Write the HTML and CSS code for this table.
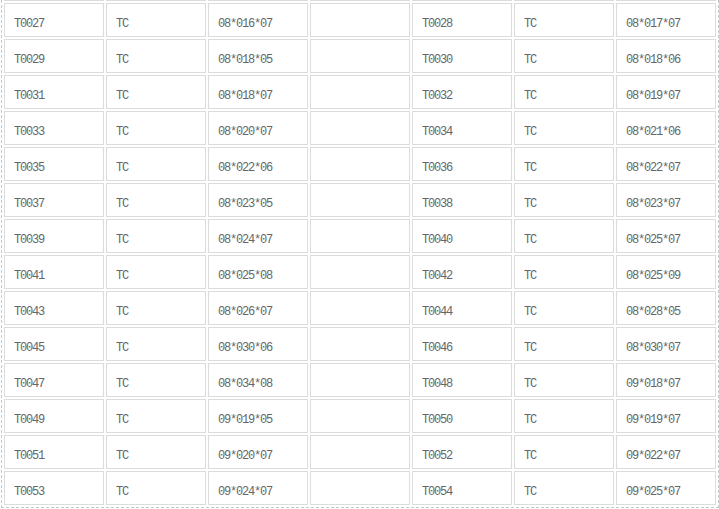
FILE: index.html
```html
<!DOCTYPE html>
<html>
<head>
<meta charset="utf-8">
<link rel="stylesheet" href="styles.css">
</head>
<body>
<table class="grid">
<tr><td>&nbsp;</td><td>&nbsp;</td><td>&nbsp;</td><td>&nbsp;</td><td>&nbsp;</td><td>&nbsp;</td><td>&nbsp;</td></tr>
<tr><td>T0027</td><td>TC</td><td>08*016*07</td><td>&nbsp;</td><td>T0028</td><td>TC</td><td>08*017*07</td></tr>
<tr><td>T0029</td><td>TC</td><td>08*018*05</td><td>&nbsp;</td><td>T0030</td><td>TC</td><td>08*018*06</td></tr>
<tr><td>T0031</td><td>TC</td><td>08*018*07</td><td>&nbsp;</td><td>T0032</td><td>TC</td><td>08*019*07</td></tr>
<tr><td>T0033</td><td>TC</td><td>08*020*07</td><td>&nbsp;</td><td>T0034</td><td>TC</td><td>08*021*06</td></tr>
<tr><td>T0035</td><td>TC</td><td>08*022*06</td><td>&nbsp;</td><td>T0036</td><td>TC</td><td>08*022*07</td></tr>
<tr><td>T0037</td><td>TC</td><td>08*023*05</td><td>&nbsp;</td><td>T0038</td><td>TC</td><td>08*023*07</td></tr>
<tr><td>T0039</td><td>TC</td><td>08*024*07</td><td>&nbsp;</td><td>T0040</td><td>TC</td><td>08*025*07</td></tr>
<tr><td>T0041</td><td>TC</td><td>08*025*08</td><td>&nbsp;</td><td>T0042</td><td>TC</td><td>08*025*09</td></tr>
<tr><td>T0043</td><td>TC</td><td>08*026*07</td><td>&nbsp;</td><td>T0044</td><td>TC</td><td>08*028*05</td></tr>
<tr><td>T0045</td><td>TC</td><td>08*030*06</td><td>&nbsp;</td><td>T0046</td><td>TC</td><td>08*030*07</td></tr>
<tr><td>T0047</td><td>TC</td><td>08*034*08</td><td>&nbsp;</td><td>T0048</td><td>TC</td><td>09*018*07</td></tr>
<tr><td>T0049</td><td>TC</td><td>09*019*05</td><td>&nbsp;</td><td>T0050</td><td>TC</td><td>09*019*07</td></tr>
<tr><td>T0051</td><td>TC</td><td>09*020*07</td><td>&nbsp;</td><td>T0052</td><td>TC</td><td>09*022*07</td></tr>
<tr><td>T0053</td><td>TC</td><td>09*024*07</td><td>&nbsp;</td><td>T0054</td><td>TC</td><td>09*025*07</td></tr>
</table>
</body>
</html>
```
FILE: styles.css
```css
html, body {
  margin: 0;
  padding: 0;
  background: #fff;
  overflow: hidden;
}
.grid {
  margin: -35px 0 0 1px;
  border: 1px dashed #c8c8c8;
  border-top: none;
  border-collapse: separate;
  border-spacing: 2px;
  table-layout: fixed;
  width: 718px;
}
.grid td {
  width: 80px;
  border: 1px solid #dcdcdc;
  padding: 14px 9px 6px;
  font-family: "Liberation Mono", monospace;
  font-size: 12px;
  letter-spacing: -1.2px;
  line-height: 12px;
  color: #666;
  white-space: nowrap;
  overflow: hidden;
  vertical-align: top;
}
```
